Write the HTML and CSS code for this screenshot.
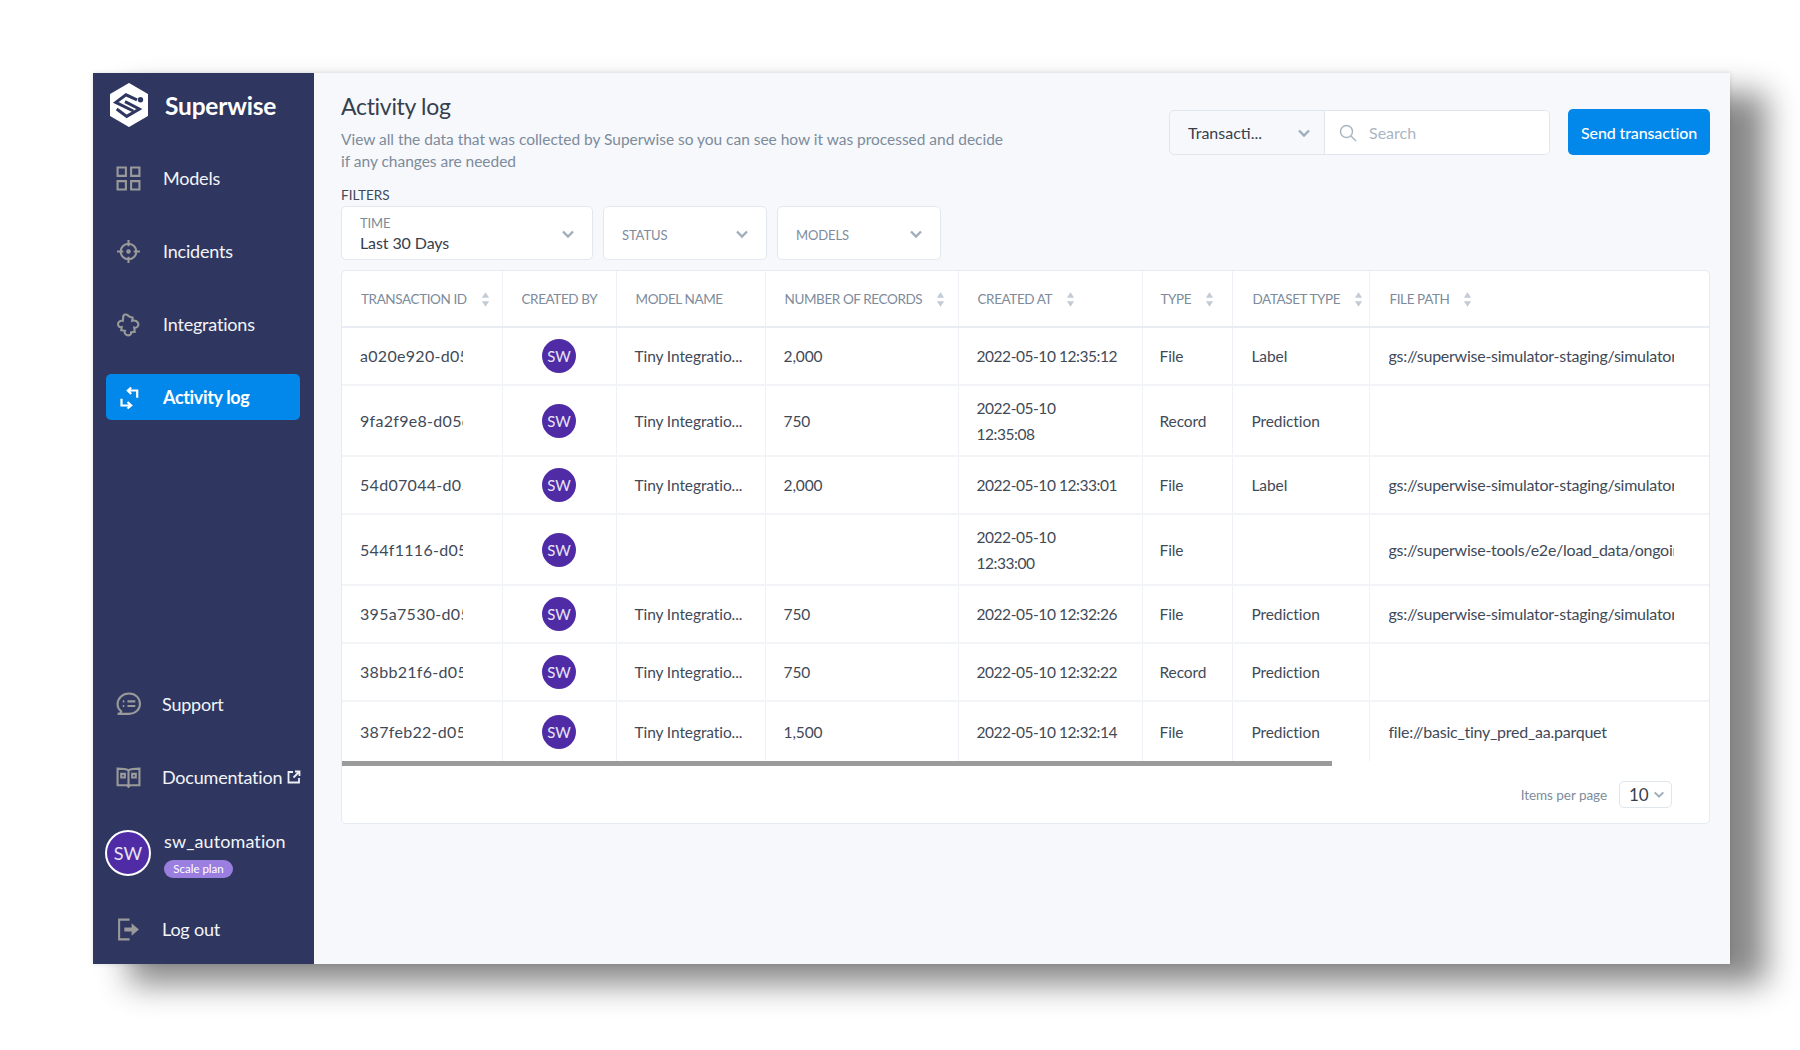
FILE: index.html
```html
<!DOCTYPE html>
<html lang="en">
<head>
<meta charset="utf-8">
<title>Superwise - Activity log</title>
<link rel="stylesheet" href="styles.css">
</head>
<body>
<svg class="defs" width="0" height="0" aria-hidden="true">
  <defs>
    <symbol id="sort" viewBox="0 0 10 18"><path d="M5 1 9 7H1Z" fill="#c3cbd5"/><path d="M5 17 1 11H9Z" fill="#c3cbd5"/></symbol>
    <symbol id="chev" viewBox="0 0 14 10"><path d="M2 2.500 7 7.500 12 2.500" fill="none" stroke="#a0aebc" stroke-width="2.400"/></symbol>
  </defs>
</svg>
<div class="window">
  <aside class="sidebar">
    <div class="brand">
      <svg class="logo" viewBox="0 0 40 44">
        <path d="M20 1 38 11.500V32.500L20 43 2 32.500V11.500Z" fill="#fff" stroke="#fff" stroke-width="2" stroke-linejoin="round"/>
        <path d="M28 16.800 17 11.800 6.800 19.400 24.300 28" fill="none" stroke="#2f3760" stroke-width="3"/>
        <path d="M7.700 26 17.700 33.400 30.300 26 16 18.700" fill="none" stroke="#2f3760" stroke-width="3"/>
        <circle cx="31.500" cy="16.800" r="2.700" fill="#2f3760"/>
      </svg>
      <span class="brand-name">Superwise</span>
    </div>
    <nav class="nav">
      <a class="nav-item">
        <svg class="nav-icon" viewBox="0 0 24 24"><path d="M1.500 1.500h8v8h-8zM14.500 1.500h8v8h-8zM1.500 14.500h8v8h-8zM14.500 14.500h8v8h-8z"/></svg>
        <span>Models</span>
      </a>
      <a class="nav-item">
        <svg class="nav-icon" viewBox="0 0 24 24"><circle cx="12" cy="12" r="7.500"/><circle cx="12" cy="12" r="1.200"/><path d="M12 1v6M12 17v6M1 12h6M17 12h6"/></svg>
        <span>Incidents</span>
      </a>
      <a class="nav-item">
        <svg class="nav-icon" viewBox="0 0 24 24"><path d="M7 4.500C7 2 11 1.500 12 4L16 5.500 15.500 8.500C18 7.500 21 9 21.500 11.500S19 15.500 17.500 15L18 19 14.500 19.500C15 22 12 23 10 22S8 19 8.500 18L5 17.500 5.500 14.500C3 15 1.500 13 2 11S5 8 6.500 8.500Z"/></svg>
        <span>Integrations</span>
      </a>
      <a class="nav-item active">
        <svg class="nav-icon" viewBox="0 0 25 25"><path d="M21.200 12.800V5.500H11.800M15.200 2.500 11.800 5.500 15.200 9M5.500 13.800V20.500H15.200M11.500 17 15.200 20.500 11.500 23.500"/></svg>
        <span>Activity log</span>
      </a>
    </nav>
    <div class="nav bottom">
      <a class="nav-item">
        <svg class="nav-icon" viewBox="0 0 24 24"><path d="M5 18.500C2.500 16.500 1.500 14 1.500 12 1.500 6 6 1.500 12.500 1.500S23 6 23 11.500 18.500 21 12.500 21H1.500C3.500 21 5 20 5 18.500Z"/><path d="M11 9h7.500M11 13.500h7.500M6.500 9h1.500M6.500 13.500h1.500"/></svg>
        <span>Support</span>
      </a>
      <a class="nav-item">
        <svg class="nav-icon" viewBox="0 0 24 24"><path d="M12 5C9 3.500 5 3.500 1.500 3.500V19.500H10.500L12 21 13.500 19.500H22.500V3.500C19 3.500 15 3.500 12 5ZM12 5V20"/><path d="M5 8.500h3.500V12H5zM15.500 8.500h3.500V12h-3.500z"/></svg>
        <span class="doc-label">Documentation</span>
        <svg class="ext" viewBox="0 0 14 14"><path d="M6 2H1.500V12.500H12V8M8 1.500H12.500V6M12.500 1.500 6.500 7.500"/></svg>
      </a>
      <div class="user">
        <div class="avatar-lg">SW</div>
        <div class="user-info">
          <div class="user-name">sw_automation</div>
          <div class="plan">Scale plan</div>
        </div>
      </div>
      <a class="nav-item">
        <svg class="nav-icon" viewBox="0 0 24 24"><path d="M13 2.500H3V21.500H13"/><path class="solid" d="M8 10H15V6L22 12 15 18V14H8Z"/></svg>
        <span>Log out</span>
      </a>
    </div>
  </aside>
  <main class="main">
    <header class="head">
      <div class="head-text">
        <h1 class="title">Activity log</h1>
        <p class="desc">View all the data that was collected by Superwise so you can see how it was processed and decide if any changes are needed</p>
      </div>
      <div class="controls">
        <div class="searchbox">
          <div class="search-select">
            <span>Transacti...</span>
            <svg class="chev" viewBox="0 0 14 10"><use href="#chev"/></svg>
          </div>
          <div class="search-input">
            <svg class="search-icon" viewBox="0 0 18 18"><circle cx="7.500" cy="7.500" r="6"/><path d="M12 12 17 17"/></svg>
            <span>Search</span>
          </div>
        </div>
        <button class="send">Send transaction</button>
      </div>
    </header>
    <div class="filters-label">FILTERS</div>
    <div class="filters">
      <div class="filter time">
        <div><div class="filter-cap">TIME</div><div class="filter-val">Last 30 Days</div></div>
        <svg class="chev" viewBox="0 0 14 10"><use href="#chev"/></svg>
      </div>
      <div class="filter small"><span class="filter-cap">STATUS</span><svg class="chev" viewBox="0 0 14 10"><use href="#chev"/></svg></div>
      <div class="filter small"><span class="filter-cap">MODELS</span><svg class="chev" viewBox="0 0 14 10"><use href="#chev"/></svg></div>
    </div>
    <section class="card">
      <table class="grid">
        <colgroup>
          <col class="c1"><col class="c2"><col class="c3"><col class="c4"><col class="c5"><col class="c6"><col class="c7"><col class="c8">
        </colgroup>
        <thead>
          <tr>
            <th><span class="th">TRANSACTION ID<svg class="sort"><use href="#sort"/></svg></span></th>
            <th><span class="th">CREATED BY</span></th>
            <th><span class="th">MODEL NAME</span></th>
            <th><span class="th">NUMBER OF RECORDS<svg class="sort"><use href="#sort"/></svg></span></th>
            <th><span class="th">CREATED AT<svg class="sort"><use href="#sort"/></svg></span></th>
            <th><span class="th">TYPE<svg class="sort"><use href="#sort"/></svg></span></th>
            <th><span class="th">DATASET TYPE<svg class="sort"><use href="#sort"/></svg></span></th>
            <th><span class="th">FILE PATH<svg class="sort"><use href="#sort"/></svg></span></th>
          </tr>
        </thead>
        <tbody>
          <tr>
            <td><span class="clip-id">a020e920-d05c-11ec-b2d7</span></td><td><span class="sw">SW</span></td><td>Tiny Integratio...</td><td>2,000</td><td class="date">2022-05-10 12:35:12</td><td>File</td><td>Label</td><td><span class="clip-path">gs://superwise-simulator-staging/simulator/transactions</span></td>
          </tr>
          <tr>
            <td><span class="clip-id">9fa2f9e8-d05c-11ec-b2d7</span></td><td><span class="sw">SW</span></td><td>Tiny Integratio...</td><td>750</td><td class="date">2022-05-10<br>12:35:08</td><td>Record</td><td>Prediction</td><td></td>
          </tr>
          <tr>
            <td><span class="clip-id">54d07044-d05c-11ec-b2d7</span></td><td><span class="sw">SW</span></td><td>Tiny Integratio...</td><td>2,000</td><td class="date">2022-05-10 12:33:01</td><td>File</td><td>Label</td><td><span class="clip-path">gs://superwise-simulator-staging/simulator/transactions</span></td>
          </tr>
          <tr>
            <td><span class="clip-id">544f1116-d05d-11ec-b2d7</span></td><td><span class="sw">SW</span></td><td></td><td></td><td class="date">2022-05-10<br>12:33:00</td><td>File</td><td></td><td><span class="clip-path">gs://superwise-tools/e2e/load_data/ongoing/transactions</span></td>
          </tr>
          <tr>
            <td><span class="clip-id">395a7530-d05c-11ec-b2d7</span></td><td><span class="sw">SW</span></td><td>Tiny Integratio...</td><td>750</td><td class="date">2022-05-10 12:32:26</td><td>File</td><td>Prediction</td><td><span class="clip-path">gs://superwise-simulator-staging/simulator/transactions</span></td>
          </tr>
          <tr>
            <td><span class="clip-id">38bb21f6-d05c-11ec-b2d7</span></td><td><span class="sw">SW</span></td><td>Tiny Integratio...</td><td>750</td><td class="date">2022-05-10 12:32:22</td><td>Record</td><td>Prediction</td><td></td>
          </tr>
          <tr>
            <td><span class="clip-id">387feb22-d05c-11ec-b2d7</span></td><td><span class="sw">SW</span></td><td>Tiny Integratio...</td><td>1,500</td><td class="date">2022-05-10 12:32:14</td><td>File</td><td>Prediction</td><td><span class="path-full">file://basic_tiny_pred_aa.parquet</span></td>
          </tr>
        </tbody>
      </table>
      <div class="scroll"><div class="thumb"></div></div>
      <footer class="pager">
        <span class="pager-label">Items per page</span>
        <div class="pager-select"><span>10</span><svg class="chev" viewBox="0 0 14 10"><use href="#chev"/></svg></div>
      </footer>
    </section>
  </main>
</div>
</body>
</html>
```
FILE: styles.css
```css
* { box-sizing: border-box; }
html, body { margin: 0; height: 100%; background: #fff; }
body {
  font-family: "Lato", "Liberation Sans", sans-serif;
  padding: 73px 70px 0 93px;
  overflow: hidden;
  color: #3b4654;
}
.defs { position: absolute; }
.window {
  display: flex;
  width: 1637px;
  height: 891px;
  background: #f6f8fc;
  box-shadow: 36px 20px 30px rgba(0, 0, 0, .47), 0 0 5px rgba(0, 0, 0, .12);
}
.sidebar {
  width: 221px;
  flex: none;
  background: #2f3760;
  display: flex;
  flex-direction: column;
  padding: 0 14px 12px 13px;
  color: #fff;
}
.brand { height: 82px; flex: none; display: flex; align-items: center; gap: 16px; padding: 0 0 18px 3px; }
.logo { width: 40px; height: 44px; flex: none; }
.brand-name { font-size: 24.5px; font-weight: 700; letter-spacing: -.2px; }
.nav { display: flex; flex-direction: column; gap: 27px; }
.bottom { margin-top: auto; }
.nav-item {
  height: 46px;
  display: flex;
  align-items: center;
  padding-left: 10px;
  border-radius: 5px;
  font-size: 18px;
  letter-spacing: -.2px;
  color: #f3f4f8;
}
.nav-item.active { background: #0288ea; color: #fff; font-weight: 700; letter-spacing: -.35px; }
.nav-icon {
  width: 25px;
  height: 25px;
  flex: none;
  margin-right: 22px;
  fill: none;
  stroke: #9a9a9a;
  stroke-width: 2;
}
.bottom .nav-icon { margin-right: 21px; }
.active .nav-icon { stroke: #fff; stroke-width: 2.200; }
.nav-icon .solid { fill: #9a9a9a; stroke: none; }
.ext { width: 14px; height: 14px; margin-left: 5px; fill: none; stroke: #eef0f5; stroke-width: 1.8; flex: none; }
.doc-label { white-space: nowrap; }
.user { height: 52px; display: flex; align-items: center; gap: 13px; }
.avatar-lg {
  width: 46px;
  height: 46px;
  flex: none;
  margin-left: -1px;
  border: 2px solid #fff;
  border-radius: 50%;
  background: #4f2ca6;
  display: flex;
  align-items: center;
  justify-content: center;
  font-size: 18px;
  color: #e8e4f5;
}
.user-info { padding-top: 2px; }
.user-name { font-size: 18px; line-height: 22px; color: #f3f4f8; letter-spacing: .1px; }
.plan {
  display: block;
  width: 69px;
  margin-top: 8px;
  height: 18px;
  line-height: 18px;
  text-align: center;
  border-radius: 9px;
  background: #9a7fe0;
  font-size: 11.5px;
  color: #fff;
}
.main { flex: 1; padding: 0 20px 0 27px; min-width: 0; }
.head { display: flex; justify-content: space-between; align-items: flex-start; height: 104px; }
.title { margin: 19px 0 0; font-size: 23px; line-height: 28px; font-weight: 400; color: #36404d; letter-spacing: -.3px; }
.desc { margin: 8px 0 0; width: 664px; font-size: 15.5px; line-height: 22px; color: #7d8b9b; letter-spacing: -.02px; }
.controls { display: flex; gap: 18px; margin-top: 36px; }
.searchbox { display: flex; height: 45px; width: 381px; margin-top: 1px; border: 1px solid #dfe6ee; border-radius: 5px; overflow: hidden; }
.search-select {
  width: 155px;
  display: flex;
  align-items: center;
  justify-content: space-between;
  padding: 0 13px 0 18px;
  border-right: 1px solid #dfe6ee;
  font-size: 16px;
  color: #36404d;
}
.search-input { flex: 1; background: #fff; display: flex; align-items: center; gap: 12px; padding-left: 14px; font-size: 16px; color: #a9b6c3; }
.search-icon { width: 18px; height: 18px; fill: none; stroke: #a9b6c3; stroke-width: 1.5; }
.chev { width: 14px; height: 10px; flex: none; }
.send {
  width: 142px;
  height: 46px;
  border: 0;
  border-radius: 5px;
  background: #0288ea;
  color: #fff;
  font: 500 16px "Lato", sans-serif;
  letter-spacing: -.12px;
}
.filters-label { font-size: 13.5px; line-height: 18px; color: #3f4a58; margin-top: 9px; }
.filters { display: flex; gap: 10px; margin-top: 2px; }
.filter {
  height: 54px;
  display: flex;
  align-items: center;
  justify-content: space-between;
  padding: 2px 17px 0 18px;
  background: #fff;
  border: 1px solid #e3e8ef;
  border-radius: 5px;
}
.filter.time { width: 252px; }
.filter.small { width: 164px; }
.filter.small .filter-cap { padding-top: 2px; }
.filter-cap { font-size: 13px; line-height: 15px; color: #7d8b9b; letter-spacing: -.1px; }
.filter-val { font-size: 16px; line-height: 21px; color: #36404d; margin-top: 1px; letter-spacing: -.1px; }
.card {
  margin-top: 10px;
  background: #fff;
  border: 1px solid #e6ebf1;
  border-radius: 5px;
  overflow: hidden;
}
.grid { width: 100%; table-layout: fixed; border-collapse: collapse; }
.c1 { width: 160px; }
.c2 { width: 114px; }
.c3 { width: 149px; }
.c4 { width: 193px; }
.c5 { width: 184px; }
.c6 { width: 90px; }
.c7 { width: 137px; }
.c8 { width: 340px; }
th {
  height: 56px;
  padding: 0 0 1px 19px;
  text-align: left;
  font-weight: 400;
  border-right: 1px solid #eef1f6;
  border-bottom: 2px solid #e9edf3;
}
th:last-child, td:last-child { border-right: 0; }
.th { display: inline-flex; align-items: center; min-height: 17px; font-size: 13.5px; color: #7d8b9b; letter-spacing: -.4px; white-space: nowrap; }
.sort { width: 9px; height: 17px; margin-left: 14px; flex: none; }
th:nth-child(6) { padding-left: 18px; }
th:nth-child(7), th:nth-child(8) { padding-left: 20px; }
td {
  height: 58px;
  padding: 8.5px 0 8.5px 18px;
  font-size: 15.5px;
  line-height: 26px;
  color: #3f4a58;
  border-right: 1px solid #eef1f6;
  border-bottom: 2px solid #f2f4f8;
  white-space: nowrap;
  letter-spacing: -.1px;
}
tr:last-child td { border-bottom: 0; height: 60px; }
td:nth-child(2) { padding: 0; text-align: center; }
td:nth-child(6) { padding-left: 17px; }
td:nth-child(7), td:nth-child(8) { padding-left: 19px; }
.date { letter-spacing: -.45px; }
.clip-id { display: block; width: 103px; overflow: hidden; font-size: 16px; letter-spacing: .3px; }
.clip-path { display: block; width: 285px; overflow: hidden; font-size: 16px; letter-spacing: -.25px; }
.path-full { font-size: 16px; letter-spacing: -.25px; }
.sw {
  display: inline-flex;
  align-items: center;
  justify-content: center;
  width: 34px;
  height: 34px;
  vertical-align: middle;
  border-radius: 50%;
  background: #4f2ca6;
  color: #e8e4f5;
  font-size: 15px;
}
.scroll { height: 5px; }
.thumb { width: 72.4%; height: 100%; background: #9b9b9b; }
.pager {
  height: 57px;
  display: flex;
  align-items: center;
  justify-content: flex-end;
  gap: 12px;
  padding-right: 37px;
}
.pager-label { font-size: 13.5px; color: #7d8b9b; letter-spacing: -.05px; }
.pager-select {
  width: 53px;
  height: 27px;
  display: flex;
  align-items: center;
  justify-content: space-between;
  padding: 0 6px 0 9px;
  border: 1px solid #dfe6ee;
  border-radius: 5px;
  font-size: 17px;
  color: #36404d;
}
.pager-select .chev { width: 12px; height: 9px; }
```
